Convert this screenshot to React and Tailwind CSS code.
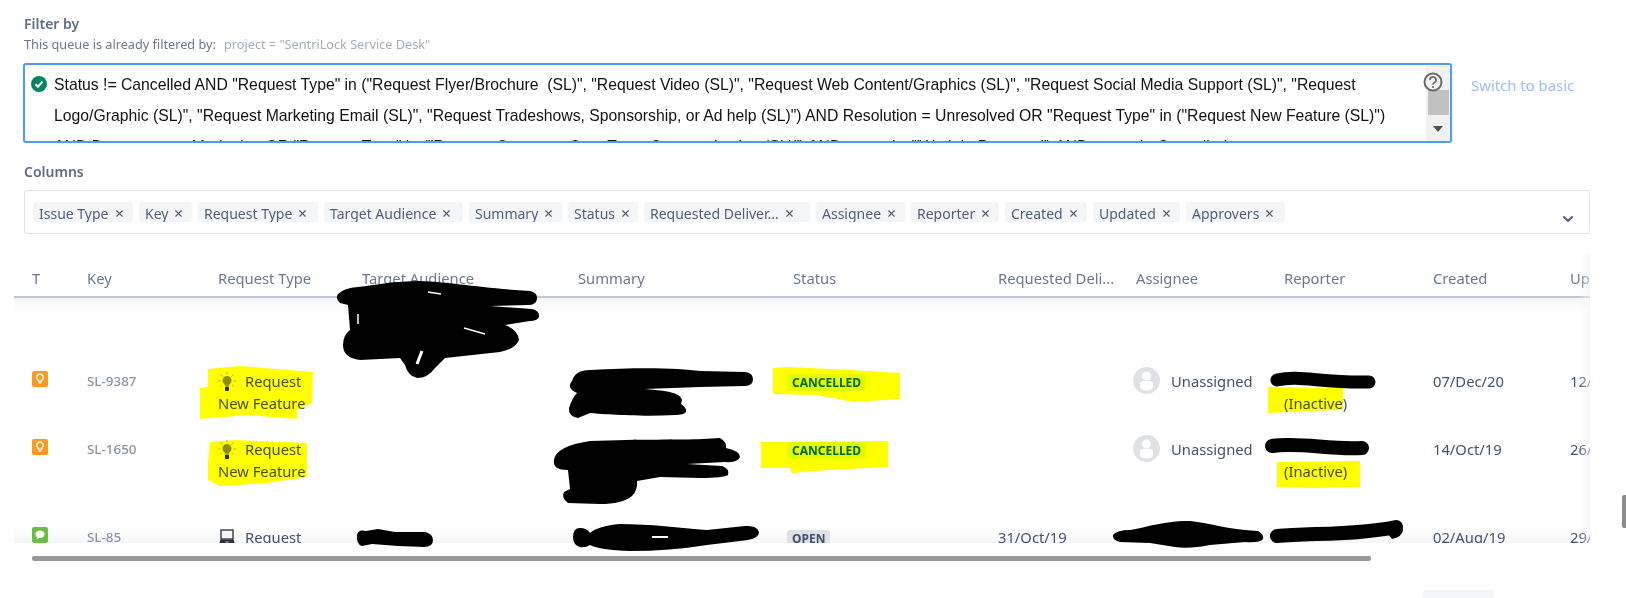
import React from "react";
import { X, ChevronDown } from "lucide-react";

const chips = [
  ["Issue Type", "w-[100px]"],
  ["Key", "w-[53px]"],
  ["Request Type", "w-[120px]"],
  ["Target Audience", "w-[139px]"],
  ["Summary", "w-[93px]"],
  ["Status", "w-[70px]"],
  ["Requested Deliver...", "w-[166px]"],
  ["Assignee", "w-[89px]"],
  ["Reporter", "w-[88px]"],
  ["Created", "w-[82px]"],
  ["Updated", "w-[87px]"],
  ["Approvers", "w-[99px]"],
];

const grid = "grid grid-cols-[55px_131px_144px_216px_215px_205px_138px_148px_149px_137px_100px]";

function IssueIcon({ kind }) {
  if (kind === "green") {
    return (
      <svg width="16" height="16" viewBox="0 0 16 16">
        <rect width="16" height="16" rx="2" fill="#6bbd45" />
        <path d="M8 3.5c-2.6 0-4.5 1.6-4.5 3.7 0 1.2.6 2.2 1.6 2.9L4.6 12.2l2.5-1.3c.3 0 .6.1.9.1 2.6 0 4.5-1.6 4.5-3.8S10.600 3.500 8 3.500z" fill="#fff" />
      </svg>
    );
  }
  return (
    <svg width="16" height="16" viewBox="0 0 16 16">
      <rect width="16" height="16" rx="2" fill="#ff991f" />
      <path d="M8 3a3.300 3.300 0 0 0-2 5.900c.4.4.7 1.100.8 1.600h2.400c.1-.5.4-1.200.8-1.600A3.300 3.300 0 0 0 8 3z" fill="none" stroke="#fff" strokeWidth="1.400" />
      <rect x="6.800" y="11.200" width="2.400" height="1.600" rx=".5" fill="#fff" />
    </svg>
  );
}

function Bulb() {
  return (
    <svg width="18" height="20" viewBox="0 0 18 20" className="inline-block align-[-5px] mr-[9px]">
      <g stroke="#9a9a70" strokeWidth=".8">
        <path d="M9 0v2.500M0 9h2.500M15.500 9H18M2.500 2.500L4.500 4.500M15.500 2.500L13.500 4.500M2.500 14L4 13M15.500 14L14 13" />
      </g>
      <path d="M9 4a4.500 4.500 0 0 0-2.800 8c.5.500.7 1 .7 1.800h4.200c0-.8.200-1.300.7-1.800A4.500 4.500 0 0 0 9 4z" fill="#8c8c3a" />
      <rect x="7" y="14.500" width="4" height="4.500" rx="1" fill="#30302a" />
    </svg>
  );
}

function Laptop() {
  return (
    <svg width="18" height="18" viewBox="0 0 18 18" className="inline-block align-[-4px] mr-[9px]">
      <rect x="3" y="1" width="12" height="9" fill="#f4f5f7" stroke="#42464e" strokeWidth="1.500" />
      <path d="M2.500 10.500h13l2 6H.500z" fill="#2b2f36" />
      <rect x="7" y="12.500" width="4" height="1" fill="#a5adba" />
    </svg>
  );
}

function Avatar() {
  return (
    <svg width="27" height="27" viewBox="0 0 27 27" className="shrink-0 -ml-[3px] -mt-[3px]">
      <circle cx="13.500" cy="13.500" r="13.500" fill="#dfe1e6" />
      <circle cx="13.500" cy="9" r="4.500" fill="#fff" />
      <path d="M7 16.500a3 3 0 0 1 3-2.500h7a3 3 0 0 1 3 2.500v3c0 3-3 4-6.500 4s-6.500-1-6.500-4z" fill="#fff" />
    </svg>
  );
}

function Lozenge({ children, open }) {
  return (
    <span className={`-ml-1.5 inline-block h-[17px] rounded-[3px] px-[5px] text-[12px] font-bold leading-[17px] ${open ? "bg-[#dfe1e6] text-[#42526e]" : "bg-[#e3fcef] text-[#006644]"}`}>
      {children}
    </span>
  );
}

function Row({ icon, issueKey, type, request, status, due, unassigned, inactive, created, updated, height }) {
  return (
    <div className={`${grid} ${height} text-[14.750px] leading-[22px] text-[#42526e]`}>
      <div className="pt-[1px]"><IssueIcon kind={icon} /></div>
      <div className="text-[13.400px] font-medium text-[#8993a4]">{issueKey}</div>
      <div className="w-[100px]">{type === "bulb" ? <Bulb /> : <Laptop />}{request}</div>
      <div />
      <div />
      <div><Lozenge open={status === "OPEN"}>{status}</Lozenge></div>
      <div>{due}</div>
      <div className="flex items-start gap-[11px]">
        {unassigned && <Avatar />}
        {unassigned && <span>Unassigned</span>}
      </div>
      <div>
        <div>&nbsp;</div>
        {inactive && <div>(Inactive)</div>}
      </div>
      <div>{created}</div>
      <div>{updated}</div>
    </div>
  );
}

// marker and pen strokes that sit on top of the page
function Marks() {
  return (
    <>
      <svg width="1626" height="598" className="pointer-events-none absolute left-0 top-0 mix-blend-multiply">
        <g fill="#ffff00">
          <path d="M208 369L240 366L313 372L312 403L297 410L297 419L247 415L200 419L200 388L208 387Z" />
          <path d="M210 442L235 440L307 443L307 477L267 483L220 486L208 480L208 463Z" />
          <path d="M773 368L787 367L850 370L900 373L900 399L853 402L817 395L773 394Z" />
          <path d="M761 442L787 442L888 441L888 467L827 470L792 473L790 468L761 468Z" />
          <path d="M1268 387L1343 388L1343 410L1307 411L1268 413Z" />
          <path d="M1277 462L1360 461L1360 487L1313 488L1277 487Z" />
        </g>
      </svg>
      <svg width="1626" height="598" className="pointer-events-none absolute left-0 top-0">
        <g fill="#000">
          <path d="M338 294Q344 288 358 287C375 285 395 281 420 281C450 282 480 288 530 291Q538 293 537 299Q536 305 528 305L490 306L532 309Q540 311 539 317Q537 321 530 321L505 325Q518 330 519 340Q515 349 500 352L445 358L435 368Q428 378 417 378Q408 376 405 365L400 358L360 360Q343 358 343 345Q343 335 350 330L348 305L340 303Q335 299 338 294Z" />
          <path d="M572 381Q575 370 590 370C640 367 680 368 700 371L745 372Q753 373 753 379Q753 386 745 386L700 387L645 389C670 391 680 393 682 400L681 404Q687 408 686 412Q684 415 675 415C640 417 600 414 590 413L578 418Q568 416 569 408Q572 398 577 393Q566 388 572 381Z" />
          <path d="M554 460Q556 446 590 441C640 439 680 440 703 439L720 438Q727 442 726 448Q740 451 740 457Q738 463 725 462L687 464L722 466Q730 469 728 475Q724 478 700 478L660 477L637 481Q638 490 632 496Q622 504 600 504L568 503Q561 498 564 492L570 489L568 470Q552 470 554 460Z" />
          <path d="M573 537Q573 528 580 528Q587 528 590 533Q598 526 620 524C650 524 680 528 707 530L745 526Q757 525 759 532Q759 538 748 540L707 545Q670 551 630 551Q600 550 590 545Q585 548 580 547Q573 545 573 537Z" />
          <path d="M357 535Q358 529 366 531L378 529L395 532L425 532Q433 534 433 540Q433 547 424 547L398 546L372 544L362 546Q356 544 357 535Z" />
          <path d="M1113 535Q1117 530 1130 530C1150 526 1170 520 1190 521C1210 523 1230 530 1258 531Q1264 534 1263 539Q1260 543 1245 542L1210 545Q1190 549 1175 547L1150 543L1120 542Q1112 540 1113 535Z" />
        </g>
        <g fill="none" stroke="#000" strokeLinecap="round">
          <path d="M1277 380C1300 375 1320 383 1369 382" strokeWidth="13" />
          <path d="M1272 446C1300 442 1330 450 1362 448" strokeWidth="14" />
          <path d="M1277 536C1310 533 1360 535 1396 527" strokeWidth="14" />
        </g>
        <path d="M1395 521Q1403 521 1403 530Q1402 537 1392 539L1385 530Z" fill="#000" />
        <g stroke="#fff" fill="none" strokeWidth="1.500">
          <path d="M358 314v10" />
          <path d="M428 292L441 294" />
          <path d="M464 328L485 334" />
          <path d="M422 351L417 364" strokeWidth="3" />
          <path d="M652 537L668 537" strokeWidth="2" />
        </g>
      </svg>
    </>
  );
}

export default function App() {
  return (
    <div className="relative h-[598px] w-[1626px] overflow-hidden bg-white font-['Noto_Sans',sans-serif]">
      {/* Filter */}
      <div className="pl-6 pt-[14px]">
        <div className="text-[14px] font-semibold leading-5 text-[#5e6c84]">Filter by</div>
        <div className="mt-[1px] flex text-[12.700px] leading-[18px] text-[#6b778c]">
          <span className="w-[200px] whitespace-nowrap">This queue is already filtered by:</span>
          <span className="text-[#a5adba]">project = "SentriLock Service Desk"</span>
        </div>
      </div>

      <div className="mt-[10px] flex items-start pl-[23px]">
        <div className="relative flex h-[80px] w-[1429px] overflow-hidden rounded-[3px] border-2 border-[#4c9aff]">
          <svg width="16" height="16" viewBox="0 0 16 16" className="absolute left-[6px] top-[11px]">
            <circle cx="8" cy="8" r="8" fill="#00875a" />
            <path d="M4.500 8.200l2.500 2.500 4.500-5" fill="none" stroke="#fff" strokeWidth="2" />
          </svg>
          <div className="h-[76px] w-[1401px] overflow-hidden pl-[29px] pt-[4px] font-['Liberation_Sans',sans-serif] text-[15.750px] leading-[31px] text-[#111111] whitespace-pre-wrap">
            {`Status != Cancelled AND "Request Type" in ("Request Flyer/Brochure  (SL)", "Request Video (SL)", "Request Web Content/Graphics (SL)", "Request Social Media Support (SL)", "Request\nLogo/Graphic (SL)", "Request Marketing Email (SL)", "Request Tradeshows, Sponsorship, or Ad help (SL)") AND Resolution = Unresolved OR "Request Type" in ("Request New Feature (SL)")\nAND Department = Marketing OR "Request Type" in ("Request Customer Care Team Communication (SL)") AND status in ("Work In Progress") AND status != Cancelled`}
          </div>
          <div className="relative w-[24px] bg-[#f1f1f1]">
            <div className="absolute left-[2px] top-[25px] h-[25px] w-[21px] bg-[#c1c1c1]" />
            <div className="absolute left-[7px] top-[61px] h-0 w-0 border-x-[5px] border-t-[6px] border-x-transparent border-t-[#505050]" />
            <svg width="20" height="20" viewBox="0 0 20 20" className="absolute -left-[3px] top-[7px]">
              <circle cx="10" cy="10" r="8.500" fill="none" stroke="#6b6b6b" strokeWidth="2" />
              <path d="M7 8a3 3 0 1 1 4.500 2.500c-1 .6-1.500 1-1.500 2" fill="none" stroke="#6b6b6b" strokeWidth="1.800" />
              <circle cx="10" cy="15" r="1.100" fill="#6b6b6b" />
            </svg>
          </div>
        </div>
        <span className="ml-[19px] mt-[12px] text-[14.900px] leading-5 text-[#9fbdee]">Switch to basic</span>
      </div>

      {/* Columns */}
      <div className="mt-[19px] pl-6 text-[14px] font-semibold leading-5 text-[#5e6c84]">Columns</div>
      <div className="ml-6 mt-2 flex h-[44px] w-[1566px] items-start gap-[6px] rounded-[3px] border border-[#dfe1e6] pl-2 pt-[11px]">
        {chips.map(([name, width]) => (
          <div key={name} className={`flex h-5 items-start overflow-hidden whitespace-nowrap rounded-[3px] bg-[#f4f5f7] pl-[6px] text-[14px] leading-[24px] text-[#505f79] ${width}`}>
            {name}
            <X size={11} strokeWidth={2.500} className="ml-[5px] mt-[6px] shrink-0" />
          </div>
        ))}
        <ChevronDown size={16} strokeWidth={3} className="ml-auto mr-[13px] mt-[9px] text-[#505f79]" />
      </div>

      {/* Table */}
      <div className="relative ml-[14px] mt-[20px] h-[289px] w-[1576px] overflow-hidden">
        <div className={`${grid} h-[44px] items-center border-b-2 border-[#c1c7d0] pl-[18px] pt-[6px] text-[14.750px] text-[#6b778c]`}>
          <div>T</div>
          <div>Key</div>
          <div>Request Type</div>
          <div>Target Audience</div>
          <div>Summary</div>
          <div>Status</div>
          <div className="whitespace-nowrap">Requested Deli...</div>
          <div>Assignee</div>
          <div>Reporter</div>
          <div>Created</div>
          <div>Up</div>
        </div>
        <div className="h-[12px] bg-gradient-to-b from-[#f4f5f7] to-white" />
        <div className="absolute bottom-0 left-0 right-0 h-[14px] bg-gradient-to-b from-transparent to-[#f4f5f7]" />
        <div className="relative pl-[18px] pt-[60px]">
          <Row icon="orange" issueKey="SL-9387" type="bulb" request="Request New Feature" status="CANCELLED" unassigned inactive created="07/Dec/20" updated="12/" height="h-[68px]" />
          <Row icon="orange" issueKey="SL-1650" type="bulb" request="Request New Feature" status="CANCELLED" unassigned inactive created="14/Oct/19" updated="26/" height="h-[88px]" />
          <Row icon="green" issueKey="SL-85" type="laptop" request="Request" status="OPEN" due="31/Oct/19" created="02/Aug/19" updated="29/" height="h-[40px]" />
        </div>
        <div className="absolute bottom-0 right-0 top-0 w-[12px] bg-gradient-to-r from-transparent to-[#f4f5f7]/60" />
      </div>

      {/* Scrollers */}
      <div className="ml-[32px] mt-[13px] h-[5px] w-[1339px] rounded-[2px] bg-[#999999]" />
      <div className="ml-[1423px] mt-[29px] h-[8px] w-[71px] rounded-t-[3px] bg-[#f4f5f7]" />
      <div className="absolute left-[1622px] top-[495px] h-[33px] w-[4px] rounded-l-[2px] bg-[#8c8c8c]" />

      <Marks />
    </div>
  );
}
